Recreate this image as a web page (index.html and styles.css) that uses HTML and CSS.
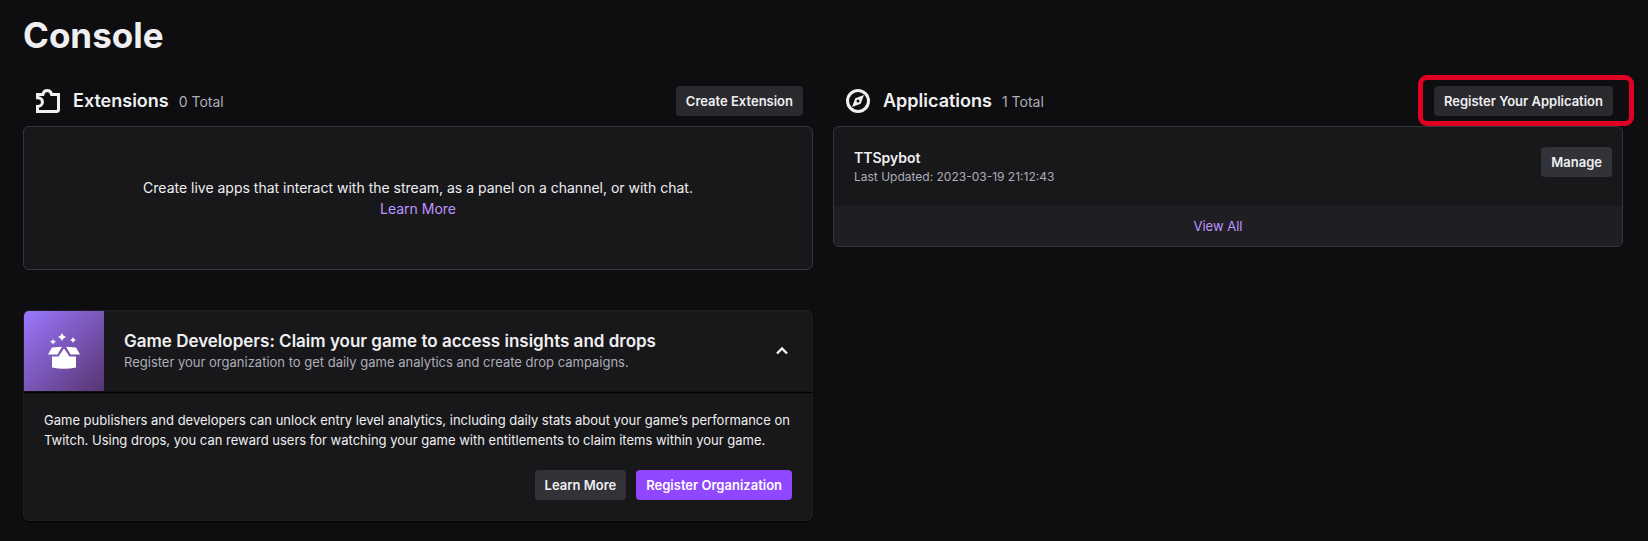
FILE: index.html
```html
<!DOCTYPE html>
<html lang="en">
<head>
<meta charset="utf-8">
<meta name="viewport" content="width=device-width, initial-scale=1">
<title>Console</title>
<link rel="stylesheet" href="styles.css">
</head>
<body>
<main class="page">
  <h1 class="page-title">Console</h1>
  <div class="columns">
    <div class="column">
      <section>
        <header class="section-head">
          <svg class="section-icon" viewBox="0 0 20 20" aria-hidden="true"><path d="M3 5.700h3.600c.3-1.600 1.200-2.700 2.900-2.700s2.600 1.100 2.900 2.700H17v10a1.300 1.300 0 0 1-1.300 1.300H3v-3.400c1.900 0 3.300-1.200 3.300-2.900S4.900 7.900 3 7.900z" fill="none" stroke="currentColor" stroke-width="2"/></svg>
          <h2 class="section-title">Extensions</h2>
          <span class="section-count">0 Total</span>
          <button class="button" type="button">Create Extension</button>
        </header>
        <div class="panel panel-empty">
          <p>Create live apps that interact with the stream, as a panel on a channel, or with chat.</p>
          <a class="link" href="#">Learn More</a>
        </div>
      </section>
      <section class="promo">
        <header class="promo-head">
          <div class="promo-art">
            <svg class="promo-icon" viewBox="0 0 40 40" aria-hidden="true"><path fill="currentColor" d="M18 2l1.400 2.600L22 6l-2.600 1.400L18 10l-1.400-2.600L14 6l2.600-1.400zM9 8l1 1.700 2 1-2 1L9 13.500l-1-1.800-2-1 2-1zM29 6l1 2 2 1-2 1-1 2-1-2-2-1 2-1zM8 16.500l10-.8-4.500 7.800H4zM22 15.700l10 .8 4 7h-9.500zM8 25.500h6.500l5.500-8 5.500 8H32V36.500q-12 2.500-24 0z"/></svg>
          </div>
          <div class="promo-heading">
            <h2 class="promo-title">Game Developers: Claim your game to access insights and drops</h2>
            <p class="promo-subtitle">Register your organization to get daily game analytics and create drop campaigns.</p>
          </div>
          <button class="toggle" type="button" aria-label="Collapse" aria-expanded="true">
            <svg class="toggle-icon" viewBox="0 0 20 20" aria-hidden="true"><path d="M5 12.500l5-5 5 5" fill="none" stroke="currentColor" stroke-width="2.400"/></svg>
          </button>
        </header>
        <div class="promo-body">
          <p>Game publishers and developers can unlock entry level analytics, including daily stats about your game’s performance on Twitch. Using drops, you can reward users for watching your game with entitlements to claim items within your game.</p>
          <div class="promo-actions">
            <button class="button" type="button">Learn More</button>
            <button class="button button-primary" type="button">Register Organization</button>
          </div>
        </div>
      </section>
    </div>
    <section class="column">
      <header class="section-head">
        <svg class="section-icon" viewBox="0 0 20 20" aria-hidden="true"><circle cx="10" cy="10" r="7" fill="none" stroke="currentColor" stroke-width="2"/><path fill="currentColor" fill-rule="evenodd" d="M14 6l-2.200 5.800L6 14l2.200-5.800zM10 9a1 1 0 1 0 0 2 1 1 0 0 0 0-2z"/></svg>
        <h2 class="section-title">Applications</h2>
        <span class="section-count">1 Total</span>
        <button class="button highlighted" type="button">Register Your Application</button>
      </header>
      <div class="panel">
        <div class="app">
          <div>
            <h3 class="app-name">TTSpybot</h3>
            <p class="app-date">Last Updated: 2023-03-19 21:12:43</p>
          </div>
          <button class="button" type="button">Manage</button>
        </div>
        <a class="view-all link" href="#">View All</a>
      </div>
    </section>
  </div>
</main>
</body>
</html>
```
FILE: styles.css
```css
* {
  box-sizing: border-box;
}

body {
  margin: 0;
  background: #0e0e10;
  color: #efeff1;
  font-family: Inter, "Liberation Sans", sans-serif;
  font-size: 13px;
  line-height: 20px;
}

h1, h2, h3, p {
  margin: 0;
}

.page {
  padding: 14px 25px 20px 23px;
}

.page-title {
  font-size: 35px;
  font-weight: 700;
  line-height: 42px;
}

.columns {
  display: grid;
  grid-template-columns: 1fr 1fr;
  align-items: start;
  gap: 20px;
  margin-top: 30px;
}

.column {
  min-width: 0;
}

.section-head {
  display: flex;
  align-items: center;
  padding: 0 10px 10px;
}

.section-icon {
  width: 30px;
  height: 30px;
  margin-right: 10px;
}

.section-title {
  margin-right: 10px;
  font-size: 18px;
  font-weight: 600;
  line-height: 30px;
}

.section-count {
  padding-top: 2px;
  color: #adadb8;
  font-size: 14px;
  line-height: 28px;
}

.section-head .button {
  margin-left: auto;
  background: #29292e;
}

.button {
  flex-shrink: 0;
  height: 30px;
  padding: 0 10px;
  border: 0;
  border-radius: 4px;
  background: #323239;
  color: #efeff1;
  font: 600 13px/28px Inter, "Liberation Sans", sans-serif;
}

.button-primary {
  background: #9147ff;
  color: #fff;
}

.highlighted {
  position: relative;
}

.highlighted::after {
  content: "";
  position: absolute;
  inset: -11px -21px -10px -16px;
  border: 5px solid #e00024;
  border-radius: 9px;
}

.panel {
  overflow: hidden;
  border: 1px solid #35353b;
  border-radius: 6px;
  background: #18181b;
}

.link {
  color: #bf94ff;
  text-decoration: none;
}

.panel-empty {
  padding: 50px 20px;
  font-size: 14px;
  line-height: 21px;
  text-align: center;
}

.app {
  display: flex;
  justify-content: space-between;
  align-items: flex-start;
  padding: 20px 10px 20px 20px;
}

.app-name {
  font-size: 14px;
  font-weight: 600;
  line-height: 21px;
}

.app-date {
  color: #adadb8;
  font-size: 12px;
  line-height: 18px;
}

.view-all {
  display: block;
  padding-right: 20px;
  background: #1f1f23;
  line-height: 40px;
  text-align: center;
}

.promo {
  overflow: hidden;
  margin-top: 40px;
  border: 1px solid #1f1f22;
  border-radius: 6px;
  background: #18181b;
  box-shadow: 0 1px 2px #000;
}

.promo-head {
  display: flex;
  align-items: center;
  border-bottom: 1px solid #111113;
  box-shadow: 0 1px 1px #000;
}

.promo-art {
  display: grid;
  flex: none;
  place-items: center;
  width: 80px;
  height: 80px;
  background: linear-gradient(135deg, #9b78ff, #573570);
  color: #fff;
}

.promo-icon {
  width: 40px;
  height: 40px;
}

.promo-heading {
  flex: 1;
  padding: 0 20px;
}

.promo-title {
  font-size: 17px;
  font-weight: 600;
  line-height: 22px;
}

.promo-subtitle {
  color: #adadb8;
}

.toggle {
  display: grid;
  place-items: center;
  width: 30px;
  height: 30px;
  margin-right: 15px;
  padding: 0;
  border: 0;
  background: none;
  color: #efeff1;
}

.toggle-icon {
  width: 20px;
  height: 20px;
}

.promo-body {
  padding: 18px 20px 20px;
}

.promo-actions {
  display: flex;
  justify-content: flex-end;
  gap: 10px;
  margin-top: 20px;
}
```
